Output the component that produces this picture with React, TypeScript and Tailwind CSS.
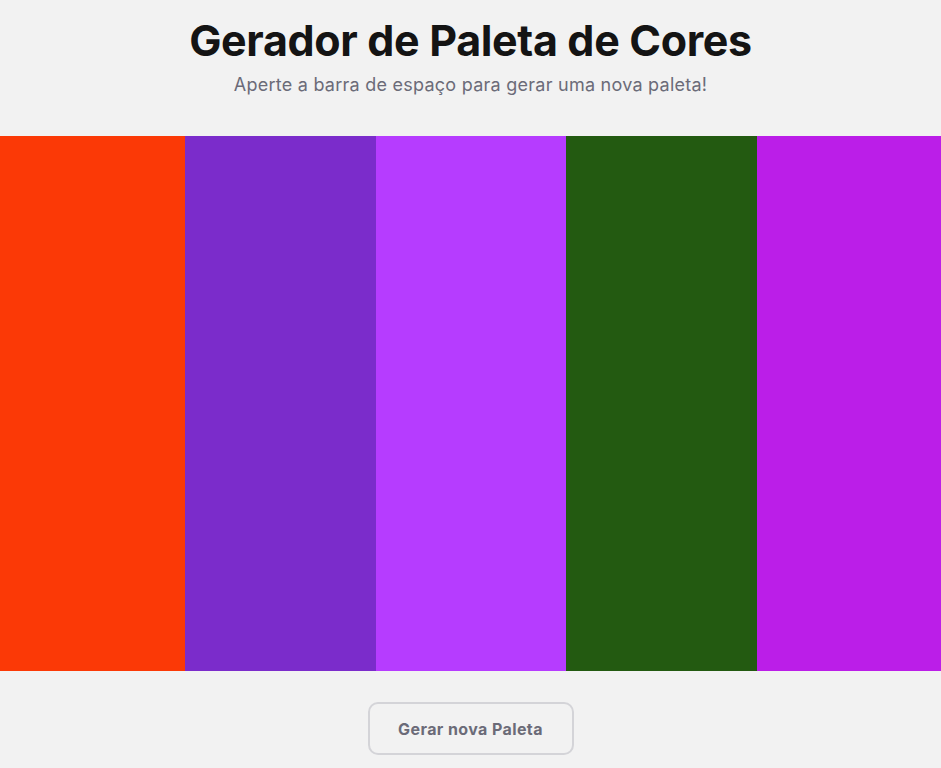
const colors = ['#fb3906', '#7b2ccb', '#b63cff', '#235a11', '#bb1ee8'];

export default function App() {
  return (
    <div className="min-h-screen bg-[#f2f2f2] font-['Inter','Noto_Sans',sans-serif]">
      {/* Header */}
      <div className="flex flex-col items-center pt-[14px]">
        <h1 className="text-[43px] leading-[52px] font-bold text-[#141414] tracking-[-0.35px]">
          Gerador de Paleta de Cores
        </h1>
        <p className="mt-[6px] text-[18px] leading-[26px] text-[#6b6b78] tracking-[0.25px]">
          Aperte a barra de espaço para gerar uma nova paleta!
        </p>
      </div>

      {/* Palette */}
      <div className="mt-[38px] grid grid-cols-[185px_191px_190px_191px_1fr] h-[535px]">
        {colors.map((c) => (
          <div key={c} style={{ backgroundColor: c }} />
        ))}
      </div>

      {/* Actions */}
      <div className="flex justify-center pt-[31px]">
        <button className="w-[206px] h-[53px] rounded-[10px] border-2 border-[#d4d4d8] text-[16px] font-bold text-[#6b6b78] tracking-[0.4px]">
          Gerar nova Paleta
        </button>
      </div>
    </div>
  );
}
